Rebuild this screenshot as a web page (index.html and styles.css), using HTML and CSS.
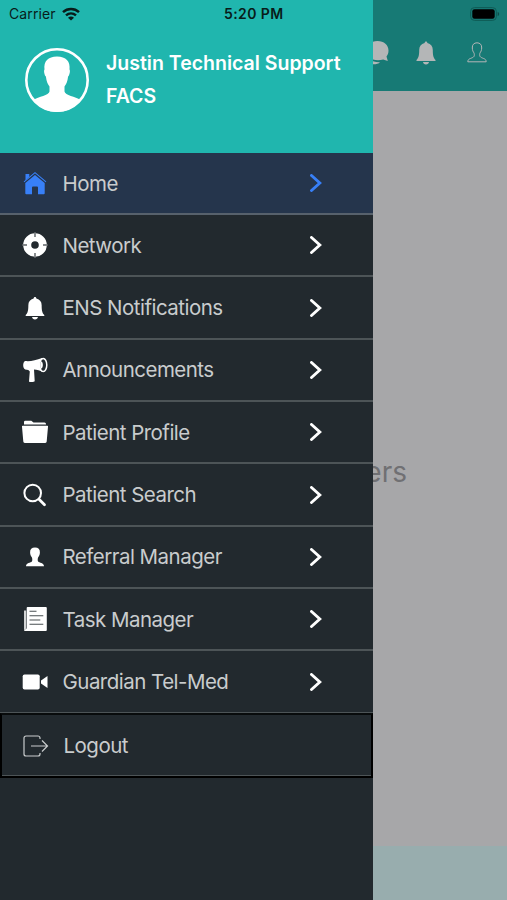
FILE: index.html
```html
<!DOCTYPE html>
<html lang="en">
<head>
<meta charset="utf-8">
<meta name="viewport" content="width=device-width">
<title>Menu</title>
<link rel="stylesheet" href="styles.css">
</head>
<body>
<svg class="defs" width="0" height="0" aria-hidden="true">
  <symbol id="bell" viewBox="0 0 20 24"><path d="M10 .5c.9 0 1.300.7 1.400 1.500 3.600.8 5.400 3.400 5.400 6.900 0 5.400.6 7.900 2.700 10.100v1H.5v-1c2.100-2.200 2.700-4.700 2.700-10.100 0-3.500 1.800-6.100 5.400-6.900C8.700 1.200 9.100.5 10 .5zM7 21h6c-.2 1.500-1.300 2.500-3 2.500s-2.800-1-3-2.500z"/></symbol>
  <symbol id="chevron" viewBox="0 0 12 18"><path d="M1.500 1.500 9.800 9l-8.300 7.500" fill="none" stroke="currentColor" stroke-width="2.900" stroke-linecap="round"/></symbol>
</svg>
<div class="phone">
  <main class="page">
    <header class="toolbar">
      <svg class="chat" viewBox="0 0 26 26"><path d="M14.500 1C21 1 25.500 5 25.500 10.500c0 3-.8 4.500-2 6l1.300 4.500-4.600-1.500C10 22 3 17 3 10.500 3 5 8 1 14.500 1z"/><path d="M3 13c1 6 6 9.500 14 9.200-2 2-7 3-11 1.300L2 25z"/></svg>
      <svg class="bell" viewBox="0 0 20 24"><use href="#bell"/></svg>
      <svg class="user" viewBox="0 0 20 21"><path d="M10 .8C7 .8 5.100 2.700 5.300 6c.1 2.300.8 3.700 1.600 4.800.5.700.6 2.900.1 3.600C5.500 16.700.8 15.900.8 19.800h18.400c0-3.900-4.700-3.100-6.200-5.400-.5-.7-.4-2.900.1-3.600.8-1.100 1.500-2.500 1.600-4.800C14.900 2.700 13 .8 10 .8z" fill="none" stroke="currentColor" stroke-width="1"/></svg>
    </header>
    <section class="content"><p class="empty">No Members</p></section>
    <footer class="bottom"></footer>
  </main>

  <aside class="drawer">
    <div class="profile">
      <svg class="avatar" viewBox="0 0 64 64"><circle cx="32" cy="32" r="30.700" fill="none" stroke="#fff" stroke-width="2.600"/><path d="M32 8.500c-9 0-13.500 5-12.500 13-1 1 0 6 1.400 7 .6 5 2 8 3.600 10v5c-.5 4-11 5-16 8.500C14.500 60 23 64 32 64s17.500-4 23.500-12c-5-3.500-15.500-4.500-16-8.500v-5c1.600-2 3-5 3.600-10 1.400-1 2.400-6 1.400-7 1-8-3.500-13-12.500-13z" fill="#fff"/></svg>
      <div class="who"><div class="name">Justin Technical Support</div><div class="org">FACS</div></div>
    </div>
    <nav class="menu">
      <a class="item active"><svg class="icon" viewBox="0 0 26 26"><path d="M13 5 22.700 13v10.200a1 1 0 0 1-1 1H16v-6.700a1 1 0 0 0-1-1h-4a1 1 0 0 0-1 1v6.700H4.300a1 1 0 0 1-1-1V13z"/><path d="M2 11.800 13 2.700l11 9.100" fill="none" stroke="currentColor" stroke-width="1.100"/><path d="M3.500 4h3.800v3L3.500 10.200z"/></svg><span class="label">Home</span><svg class="chevron"><use href="#chevron"/></svg></a>
      <a class="item"><svg class="icon" viewBox="0 0 26 26"><circle cx="13" cy="13" r="7.800" fill="none" stroke="currentColor" stroke-width="8"/><path d="M13 1v4M13 21v4M1 13h4M21 13h4" stroke="#22292e" stroke-width="1.900"/><path d="M13 .5v4.500M13 21v4.500M.5 13H5M21 13h4.500" stroke="currentColor" stroke-width=".9"/></svg><span class="label">Network</span><svg class="chevron"><use href="#chevron"/></svg></a>
      <a class="item"><svg class="icon" viewBox="0 0 26 26"><use href="#bell" x="3" y="1.500" width="20" height="23.500"/></svg><span class="label">ENS Notifications</span><svg class="chevron"><use href="#chevron"/></svg></a>
      <a class="item"><svg class="icon" viewBox="0 0 26 26"><path d="M3.200 4C8 4.500 14 3.500 20 1l1 14c-3-1.600-6-2.400-9-2.500l.7 11.500c0 1.300-5.700 1.600-5.700.2l.8-9.700-1.500-1.500-3.100-.4C.5 11 .6 5 3.200 4z"/><ellipse cx="21.200" cy="8" rx="3.600" ry="6.500" fill="#22292e" stroke="currentColor" stroke-width="1.500"/><path d="M19 4.200c2.500.5 2.500 7 0 7.600-1-1.500-1-6 0-7.600z"/></svg><span class="label">Announcements</span><svg class="chevron"><use href="#chevron"/></svg></a>
      <a class="item"><svg class="icon" viewBox="0 0 26 26"><path d="M2 5.500V3a1.300 1.300 0 0 1 1.300-1.300h6L11.500 3.500h11A1.500 1.500 0 0 1 24 5v.5z"/><path d="M.8 6.700h24.400a.8.800 0 0 1 .8 1l-1.300 14.800a1.500 1.500 0 0 1-1.500 1.400H2.800a1.500 1.500 0 0 1-1.500-1.400L0 7.700a.8.800 0 0 1 .8-1z"/></svg><span class="label">Patient Profile</span><svg class="chevron"><use href="#chevron"/></svg></a>
      <a class="item"><svg class="icon" viewBox="0 0 26 26" fill="none" stroke="currentColor"><circle cx="10.700" cy="11" r="8.300" stroke-width="2"/><path d="m17 17.300 5.500 5.500" stroke-width="2.800" stroke-linecap="round"/></svg><span class="label">Patient Search</span><svg class="chevron"><use href="#chevron"/></svg></a>
      <a class="item"><svg class="icon" viewBox="0 0 26 26"><path d="M13 3.500c-3.300 0-5.100 1.700-4.900 5 .1 2.200.7 3.600 1.700 4.700.5.600.7 3.300.2 4-1.200 2-6 1.100-6 5.100h18c0-4-4.800-3.100-6-5.100-.5-.7-.3-3.400.2-4 1-1.100 1.600-2.500 1.700-4.700.2-3.300-1.600-5-4.900-5z"/></svg><span class="label">Referral Manager</span><svg class="chevron"><use href="#chevron"/></svg></a>
      <a class="item"><svg class="icon" viewBox="0 0 26 26"><path d="M2 4.500h2.200v18.200L2 23.500z" opacity=".8"/><path d="M5.500 1h18.300a1 1 0 0 1 1 1v22a1 1 0 0 1-1 1H3.500C2.600 25 2 24.500 2 23.500c2 0 2.700-.4 2.700-1.700V2c0-.6.300-1 .8-1z"/><path d="M7.500 5.300h7M7.500 9.700h13.800M7.500 14h10.800M7.500 18.300h13.800" stroke="#4a5053" stroke-width="1.100"/></svg><span class="label">Task Manager</span><svg class="chevron"><use href="#chevron"/></svg></a>
      <a class="item"><svg class="icon" viewBox="0 0 26 26"><rect x=".7" y="5.500" width="17" height="15" rx="1.800"/><path d="M19 11.500 25.500 7v12L19 14.500z"/></svg><span class="label">Guardian Tel-Med</span><svg class="chevron"><use href="#chevron"/></svg></a>
      <a class="item logout"><svg class="icon" viewBox="0 0 26 26" fill="none" stroke="currentColor" stroke-width="1.200"><path d="M17 6V5a2 2 0 0 0-2-2H3a2 2 0 0 0-2 2v16a2 2 0 0 0 2 2h12a2 2 0 0 0 2-2v-1M8 13h16.500M19 7.500l5.500 5.500-5.500 5.500"/></svg><span class="label">Logout</span></a>
    </nav>
  </aside>

  <div class="status">
    <span class="carrier">Carrier</span>
    <svg class="wifi" viewBox="0 0 18 14" fill="none" stroke="#081c1a" stroke-width="2.500"><path d="M1 5.200c4.600-4.200 11.400-4.200 16 0M4 8.400c3-2.600 7-2.600 10 0"/><path d="M9 13.500 6 10.700c1.800-1.500 4.200-1.500 6 0z" fill="#081c1a" stroke="none"/></svg>
    <span class="time">5:20 PM</span>
    <svg class="battery" viewBox="0 0 30 14"><rect x=".6" y=".6" width="25.800" height="12.800" rx="3.800" fill="none" stroke="#0f5b56" stroke-width="1"/><rect x="2.300" y="2.300" width="22.400" height="9.400" rx="2.200"/><path d="M27.700 4.800c2 .8 2 3.600 0 4.400z" fill="#0d4d49"/></svg>
  </div>
</div>
</body>
</html>
```

FILE: styles.css
```css
* { box-sizing: border-box; }
body { margin: 0; font-family: Inter, "Liberation Sans", sans-serif; }
.defs { position: absolute; }
svg { fill: currentColor; flex: none; }
svg[fill="none"] { fill: none; }

.phone { position: relative; width: 507px; height: 900px; overflow: hidden; }

.page { display: flex; flex-direction: column; height: 100%; background: #a7a7a9; }
.toolbar { height: 91px; flex: none; display: flex; align-items: center; justify-content: flex-end; padding: 14px 20px 0 0; background: #177a75; color: #b4b6b7; }
.chat { width: 26px; height: 26px; margin-right: 27px; }
.bell { width: 20px; height: 24px; margin-right: 31px; }
.user { width: 20px; height: 21px; }
.content { flex: 1; display: flex; align-items: center; justify-content: center; padding-top: 6px; }
.empty { margin: 0; width: 307px; text-align: right; font-size: 28px; line-height: 34px; color: #707073; }
.bottom { height: 54px; flex: none; background: #98adae; }

.drawer { position: absolute; top: 0; left: 0; width: 372.500px; height: 900px; background: #22292e; }
.profile { height: 153px; display: flex; align-items: flex-start; padding: 48px 0 0 25px; background: #20b6ae; color: #fff; }
.avatar { width: 64px; height: 64px; }
.who { margin-left: 17px; margin-top: -1.500px; font-size: 19.500px; font-weight: 600; line-height: 33px; white-space: nowrap; }
.menu { display: flex; flex-direction: column; }
.item { height: 62.350px; display: flex; align-items: center; padding: 0 50.500px 0 22px; border-bottom: 2px solid #4d5457; color: #fff; }
.item.active { height: 62px; background: #25354c; color: #3880f8; border-color: #57616c; }
.icon { width: 26px; height: 26px; }
.label { flex: 1; margin-left: 14.500px; padding-top: 1px; font-size: 20.500px; letter-spacing: -.52px; line-height: 26px; color: #c9cccd; white-space: nowrap; }
.chevron { width: 12px; height: 18px; }
.item.logout { height: 65px; margin-top: -.500px; border: 2px solid #000; border-top-color: #080b0c; box-shadow: inset 0 -1px #4d5457; padding-left: 21px; color: #c9cccd; }
.logout .label { padding-top: 0; }

.status { position: absolute; top: 0; left: 0; width: 100%; height: 28px; display: flex; align-items: center; padding: 0 7px 0 9px; color: #081c1a; font-size: 14px; line-height: 16px; }
.carrier { width: 48px; letter-spacing: .1px; }
.wifi { width: 18px; height: 14px; margin-left: 5px; }
.time { margin-left: 144px; font-weight: 600; letter-spacing: .4px; }
.battery { width: 30px; height: 14px; margin-left: auto; color: #000; }
```
